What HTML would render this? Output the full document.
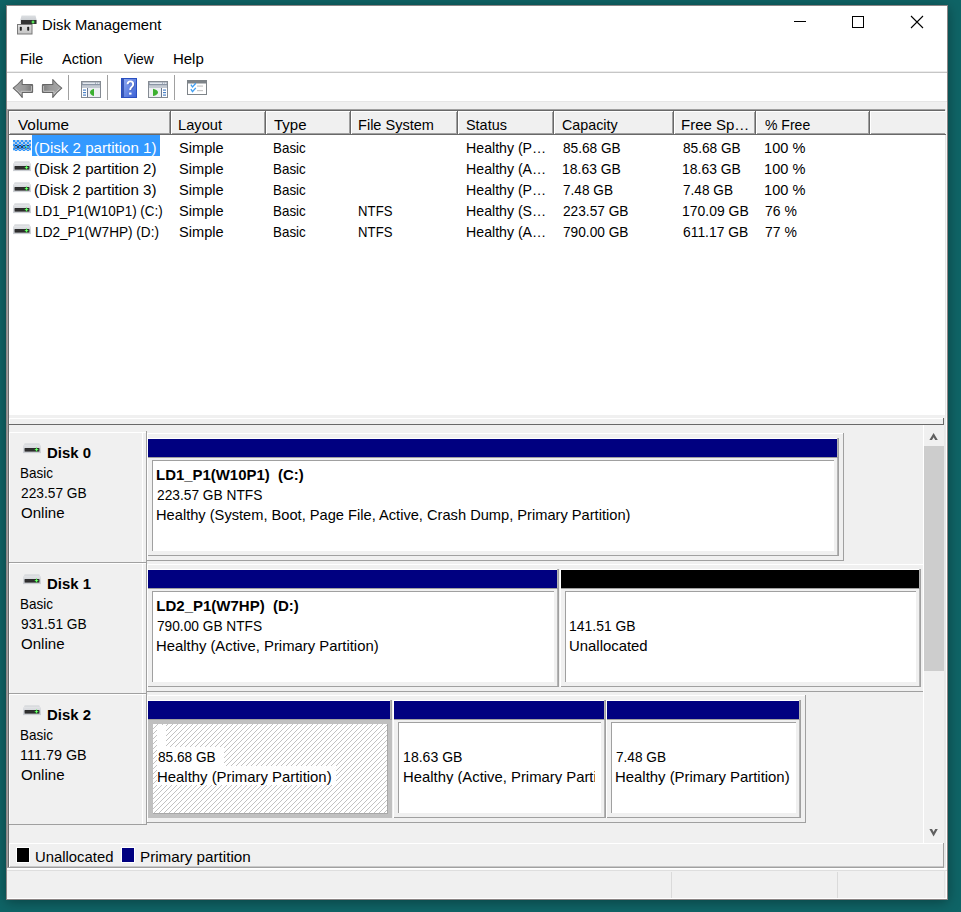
<!DOCTYPE html>
<html><head><meta charset="utf-8"><style>
html,body{margin:0;padding:0;width:961px;height:912px;overflow:hidden;}
body{background:#0f6466;position:relative;font-family:"Liberation Sans",sans-serif;}
body div, body svg{position:absolute;box-sizing:content-box;}
.t{white-space:pre;line-height:20px;height:20px;}
</style></head><body>
<div style="left:6px;top:5px;width:942px;height:895px;background:#fff;border:0;box-shadow:0 2px 12px rgba(0,0,0,0.35)"></div>
<div style="left:6px;top:5px;width:940px;height:893px;border:1px solid #8a8585;"></div>
<svg style="left:16px;top:14px" width="22" height="21" viewBox="0 0 22 21">
<defs><linearGradient id="dtop" x1="0" y1="0" x2="0" y2="1"><stop offset="0" stop-color="#dcdfe2"/><stop offset="1" stop-color="#c0c4c8"/></linearGradient>
<linearGradient id="plate" x1="0" y1="0" x2="0" y2="1"><stop offset="0" stop-color="#e4e4e4"/><stop offset="1" stop-color="#c4c4c4"/></linearGradient></defs>
<path d="M5.5 1.5 H19.5 L20.5 5.5 V9.5 H4.5 V5.5 Z" fill="url(#dtop)"/>
<rect x="5" y="6" width="15.5" height="4" fill="#333"/>
<rect x="15.4" y="7.5" width="3.2" height="1" fill="#3df03d"/><rect x="16.5" y="6.3" width="1" height="3.4" fill="#3df03d"/><circle cx="17" cy="8" r="0.8" fill="#8aff8a"/>
<rect x="1.5" y="10.5" width="14.5" height="9.5" fill="url(#plate)" stroke="#7a7a7a" stroke-width="1"/>
<rect x="3.8" y="12.8" width="2" height="4" rx="0.8" fill="#222"/>
<rect x="11.2" y="12.8" width="2" height="4" rx="0.8" fill="#222"/>
</svg>
<div class="t" style="left:41.80px;top:14.80px;font-size:15px;transform:scaleX(0.9874);transform-origin:1.00px 0;color:#000;">Disk Management</div>
<div style="left:794px;top:21px;width:12px;height:1px;background:#000;"></div>
<div style="left:852px;top:16px;width:10px;height:10px;border:1px solid #000"></div>
<svg style="left:910px;top:15px" width="14" height="14" viewBox="0 0 14 14"><path d="M1 1 L13 13 M13 1 L1 13" stroke="#000" stroke-width="1.1"/></svg>
<div class="t" style="left:19.50px;top:48.80px;font-size:15px;transform:scaleX(0.9550);transform-origin:1.00px 0;color:#000;">File</div>
<div class="t" style="left:62.40px;top:48.80px;font-size:15px;transform:scaleX(0.9674);transform-origin:0.00px 0;color:#000;">Action</div>
<div class="t" style="left:123.60px;top:48.80px;font-size:15px;transform:scaleX(0.9257);transform-origin:0.00px 0;color:#000;">View</div>
<div class="t" style="left:172.90px;top:48.80px;font-size:15px;color:#000;">Help</div>
<div style="left:7px;top:71px;width:940px;height:1px;background:#ececec;"></div>
<div style="left:7px;top:72px;width:940px;height:1px;background:#c6c6c6;"></div>
<svg style="left:12px;top:78px" width="52" height="21" viewBox="0 0 52 21">
<defs><linearGradient id="arrL" x1="0" y1="0" x2="1" y2="0"><stop offset="0" stop-color="#a9a9a9"/><stop offset="0.6" stop-color="#999"/><stop offset="1" stop-color="#747474"/></linearGradient>
<linearGradient id="arrR" x1="1" y1="0" x2="0" y2="0"><stop offset="0" stop-color="#a9a9a9"/><stop offset="0.6" stop-color="#999"/><stop offset="1" stop-color="#7a7a7a"/></linearGradient></defs>
<path d="M1.2 10.2 Q6.2 6.2 10.2 1.5 V6.5 H20 Q20.6 6.5 20.6 7.2 V13.8 Q20.6 14.5 20 14.5 H10.2 V19.5 Q6.2 14.2 1.2 10.2 Z" fill="url(#arrL)" stroke="#666" stroke-width="1.05" stroke-linejoin="round"/>
<path d="M3.4 10.6 Q6.6 13.2 9 16 V13.3 H19.4 V8" fill="none" stroke="#c6c6c6" stroke-width="0.9"/>
<path d="M49.8 10.2 Q44.8 6.2 40.8 1.5 V6.5 H31 Q30.4 6.5 30.4 7.2 V13.8 Q30.4 14.5 31 14.5 H40.8 V19.5 Q44.8 14.2 49.8 10.2 Z" fill="url(#arrR)" stroke="#666" stroke-width="1.05" stroke-linejoin="round"/>
<path d="M31.6 8 V13.3 H42 V16 Q44.4 13.2 47.6 10.6" fill="none" stroke="#c6c6c6" stroke-width="0.9"/>
</svg>
<div style="left:68px;top:75px;width:1px;height:25px;background:#a0a0a0;"></div>
<div style="left:107px;top:75px;width:1px;height:25px;background:#a0a0a0;"></div>
<div style="left:174px;top:75px;width:1px;height:25px;background:#a0a0a0;"></div>
<svg style="left:81px;top:81px" width="21" height="18" viewBox="0 0 21 18"><rect x="0.5" y="0.5" width="19" height="16" fill="#eef0f3" stroke="#858b93"/><rect x="1" y="1" width="18" height="3" fill="#a7afbb"/><rect x="2" y="1.6" width="12" height="1.4" fill="#e4e8ee"/><rect x="15" y="1.6" width="1.4" height="1.4" fill="#e4e8ee"/><rect x="17" y="1.6" width="1.4" height="1.4" fill="#e4e8ee"/><rect x="1" y="3.5" width="18" height="1" fill="#6f7c90"/><rect x="1" y="4.5" width="18" height="2.5" fill="#c3c9d2"/><rect x="1" y="7" width="5" height="9" fill="#fff"/><rect x="6" y="7" width="1" height="9" fill="#6a7890"/><rect x="2" y="8.5" width="3" height="1.2" fill="#4a82c8"/><rect x="2" y="11" width="3" height="1.2" fill="#4a82c8"/><rect x="2" y="13.5" width="3" height="1.2" fill="#4a82c8"/><path d="M13 7.8 V15 Q9 13.8 9 11.4 Q9 9 13 7.8 Z" fill="#3cb030"/></svg>
<svg style="left:148px;top:81px" width="21" height="18" viewBox="0 0 21 18"><rect x="0.5" y="0.5" width="19" height="16" fill="#eef0f3" stroke="#858b93"/><rect x="1" y="1" width="18" height="3" fill="#a7afbb"/><rect x="2" y="1.6" width="12" height="1.4" fill="#e4e8ee"/><rect x="15" y="1.6" width="1.4" height="1.4" fill="#e4e8ee"/><rect x="17" y="1.6" width="1.4" height="1.4" fill="#e4e8ee"/><rect x="1" y="3.5" width="18" height="1" fill="#6f7c90"/><rect x="1" y="4.5" width="18" height="2.5" fill="#c3c9d2"/><rect x="14" y="7" width="5" height="9" fill="#fff"/><rect x="13" y="7" width="1" height="9" fill="#6a7890"/><rect x="15" y="8.5" width="3" height="1.2" fill="#4a82c8"/><rect x="15" y="11" width="3" height="1.2" fill="#4a82c8"/><rect x="15" y="13.5" width="3" height="1.2" fill="#4a82c8"/><path d="M5 7.8 V15 Q10 13.8 10 11.4 Q10 9 5 7.8 Z" fill="#3cb030"/></svg>
<svg style="left:121px;top:78px" width="16" height="20" viewBox="0 0 16 20">
<defs><linearGradient id="hb" x1="0" y1="0" x2="1" y2="1"><stop offset="0" stop-color="#8aa6f0"/><stop offset="1" stop-color="#3d63d6"/></linearGradient></defs>
<rect x="0" y="0" width="16" height="20" fill="#2a4fc0"/>
<rect x="3" y="1" width="12" height="18" fill="url(#hb)"/>
<rect x="1" y="1" width="2" height="18" fill="#3656b8"/>
<path d="M6.6 6.2 Q6.8 3.4 9.4 3.4 Q12.2 3.4 12.2 6.2 Q12.2 8 10.4 9.2 Q9.2 10 9.2 12" stroke="#22337a" stroke-width="2" fill="none" opacity="0.35" transform="translate(0.8,0.6)"/><path d="M6.6 6.2 Q6.8 3.4 9.4 3.4 Q12.2 3.4 12.2 6.2 Q12.2 8 10.4 9.2 Q9.2 10 9.2 12" stroke="#fff" stroke-width="1.9" fill="none"/><rect x="8.1" y="14.6" width="2.4" height="2" fill="#fff"/>
</svg>
<svg style="left:187px;top:80px" width="20" height="15" viewBox="0 0 20 15">
<rect x="0.5" y="0.5" width="19" height="14" fill="#fff" stroke="#7e8489"/>
<rect x="1" y="1" width="18" height="2.5" fill="#7e8489"/>
<path d="M3.9 4.6 L5.5 7 L8.8 3.3" stroke="#3f9ef2" stroke-width="1.35" fill="none"/>
<path d="M3.9 9.2 L5.5 11.6 L8.8 7.9" stroke="#3f9ef2" stroke-width="1.35" fill="none"/>
<rect x="10" y="5.5" width="6" height="1.2" fill="#c8c8c8"/><rect x="10" y="10" width="6" height="1.2" fill="#c8c8c8"/>
</svg>
<div style="left:7px;top:101px;width:940px;height:1px;background:#e6e6e6;"></div>
<div style="left:7px;top:102px;width:940px;height:7px;background:#f0f0f0;"></div>
<div style="left:7px;top:109px;width:940px;height:1px;background:#a0a0a0;"></div>
<div style="left:8px;top:110px;width:938px;height:1px;background:#696969;"></div>
<div style="left:7px;top:109px;width:1px;height:309px;background:#a0a0a0;"></div>
<div style="left:8px;top:110px;width:1px;height:308px;background:#696969;"></div>
<div style="left:9px;top:111px;width:936px;height:304px;background:#fff;"></div>
<div style="left:9px;top:415px;width:938px;height:3px;background:#f0f0f0;"></div>
<div style="left:945px;top:109px;width:1px;height:309px;background:#e6e6e6;"></div>
<div style="left:946px;top:102px;width:1px;height:316px;background:#f7f7f7;"></div>
<div style="left:9px;top:111px;width:162px;height:24px;background:#f0f0f0;"></div>
<div style="left:9px;top:111px;width:162px;height:1px;background:#fff;"></div>
<div style="left:9px;top:111px;width:1px;height:24px;background:#fff;"></div>
<div style="left:169px;top:112px;width:1px;height:22px;background:#a0a0a0;"></div>
<div style="left:170px;top:111px;width:1px;height:24px;background:#696969;"></div>
<div style="left:10px;top:133px;width:160px;height:1px;background:#a0a0a0;"></div>
<div style="left:9px;top:134px;width:162px;height:1px;background:#696969;"></div>
<div class="t" style="left:17.50px;top:114.80px;font-size:15px;transform:scaleX(1.0203);transform-origin:0.00px 0;color:#000;">Volume</div>
<div style="left:171px;top:111px;width:95px;height:24px;background:#f0f0f0;"></div>
<div style="left:171px;top:111px;width:95px;height:1px;background:#fff;"></div>
<div style="left:171px;top:111px;width:1px;height:24px;background:#fff;"></div>
<div style="left:264px;top:112px;width:1px;height:22px;background:#a0a0a0;"></div>
<div style="left:265px;top:111px;width:1px;height:24px;background:#696969;"></div>
<div style="left:172px;top:133px;width:93px;height:1px;background:#a0a0a0;"></div>
<div style="left:171px;top:134px;width:95px;height:1px;background:#696969;"></div>
<div class="t" style="left:177.60px;top:114.80px;font-size:15px;transform:scaleX(0.9762);transform-origin:1.00px 0;color:#000;">Layout</div>
<div style="left:266px;top:111px;width:85px;height:24px;background:#f0f0f0;"></div>
<div style="left:266px;top:111px;width:85px;height:1px;background:#fff;"></div>
<div style="left:266px;top:111px;width:1px;height:24px;background:#fff;"></div>
<div style="left:349px;top:112px;width:1px;height:22px;background:#a0a0a0;"></div>
<div style="left:350px;top:111px;width:1px;height:24px;background:#696969;"></div>
<div style="left:267px;top:133px;width:83px;height:1px;background:#a0a0a0;"></div>
<div style="left:266px;top:134px;width:85px;height:1px;background:#696969;"></div>
<div class="t" style="left:274.00px;top:114.80px;font-size:15px;color:#000;">Type</div>
<div style="left:351px;top:111px;width:107px;height:24px;background:#f0f0f0;"></div>
<div style="left:351px;top:111px;width:107px;height:1px;background:#fff;"></div>
<div style="left:351px;top:111px;width:1px;height:24px;background:#fff;"></div>
<div style="left:456px;top:112px;width:1px;height:22px;background:#a0a0a0;"></div>
<div style="left:457px;top:111px;width:1px;height:24px;background:#696969;"></div>
<div style="left:352px;top:133px;width:105px;height:1px;background:#a0a0a0;"></div>
<div style="left:351px;top:134px;width:107px;height:1px;background:#696969;"></div>
<div class="t" style="left:357.70px;top:114.80px;font-size:15px;transform:scaleX(0.9694);transform-origin:1.00px 0;color:#000;">File System</div>
<div style="left:458px;top:111px;width:96px;height:24px;background:#f0f0f0;"></div>
<div style="left:458px;top:111px;width:96px;height:1px;background:#fff;"></div>
<div style="left:458px;top:111px;width:1px;height:24px;background:#fff;"></div>
<div style="left:552px;top:112px;width:1px;height:22px;background:#a0a0a0;"></div>
<div style="left:553px;top:111px;width:1px;height:24px;background:#696969;"></div>
<div style="left:459px;top:133px;width:94px;height:1px;background:#a0a0a0;"></div>
<div style="left:458px;top:134px;width:96px;height:1px;background:#696969;"></div>
<div class="t" style="left:465.60px;top:114.80px;font-size:15px;transform:scaleX(0.9613);transform-origin:0.00px 0;color:#000;">Status</div>
<div style="left:554px;top:111px;width:120px;height:24px;background:#f0f0f0;"></div>
<div style="left:554px;top:111px;width:120px;height:1px;background:#fff;"></div>
<div style="left:554px;top:111px;width:1px;height:24px;background:#fff;"></div>
<div style="left:672px;top:112px;width:1px;height:22px;background:#a0a0a0;"></div>
<div style="left:673px;top:111px;width:1px;height:24px;background:#696969;"></div>
<div style="left:555px;top:133px;width:118px;height:1px;background:#a0a0a0;"></div>
<div style="left:554px;top:134px;width:120px;height:1px;background:#696969;"></div>
<div class="t" style="left:561.90px;top:114.80px;font-size:15px;transform:scaleX(0.9531);transform-origin:0.00px 0;color:#000;">Capacity</div>
<div style="left:674px;top:111px;width:82px;height:24px;background:#f0f0f0;"></div>
<div style="left:674px;top:111px;width:82px;height:1px;background:#fff;"></div>
<div style="left:674px;top:111px;width:1px;height:24px;background:#fff;"></div>
<div style="left:754px;top:112px;width:1px;height:22px;background:#a0a0a0;"></div>
<div style="left:755px;top:111px;width:1px;height:24px;background:#696969;"></div>
<div style="left:675px;top:133px;width:80px;height:1px;background:#a0a0a0;"></div>
<div style="left:674px;top:134px;width:82px;height:1px;background:#696969;"></div>
<div class="t" style="left:681.00px;top:114.80px;font-size:15px;color:#000;">Free Sp…</div>
<div style="left:756px;top:111px;width:114px;height:24px;background:#f0f0f0;"></div>
<div style="left:756px;top:111px;width:114px;height:1px;background:#fff;"></div>
<div style="left:756px;top:111px;width:1px;height:24px;background:#fff;"></div>
<div style="left:868px;top:112px;width:1px;height:22px;background:#a0a0a0;"></div>
<div style="left:869px;top:111px;width:1px;height:24px;background:#696969;"></div>
<div style="left:757px;top:133px;width:112px;height:1px;background:#a0a0a0;"></div>
<div style="left:756px;top:134px;width:114px;height:1px;background:#696969;"></div>
<div class="t" style="left:764.50px;top:114.80px;font-size:15px;transform:scaleX(0.9353);transform-origin:0.00px 0;color:#000;">% Free</div>
<div style="left:870px;top:111px;width:76px;height:24px;background:#f0f0f0;"></div>
<div style="left:870px;top:111px;width:76px;height:1px;background:#fff;"></div>
<div style="left:870px;top:111px;width:1px;height:24px;background:#fff;"></div>
<div style="left:871px;top:133px;width:74px;height:1px;background:#a0a0a0;"></div>
<div style="left:870px;top:134px;width:76px;height:1px;background:#696969;"></div>
<div style="left:32px;top:135px;width:128px;height:21px;background:#3399ff;"></div>
<svg style="left:13px;top:140px" width="18" height="11" viewBox="0 0 18 11"><defs><linearGradient id="dvb" x1="0" y1="0" x2="0" y2="1"><stop offset="0" stop-color="#dfe1e4"/><stop offset="1" stop-color="#c9ccd1"/></linearGradient></defs><path d="M1.6 0.3 H16.3 L17.2 2.4 H0.7 Z" fill="#d9dbde"/><rect x="0" y="2.3" width="18" height="7.8" fill="url(#dvb)"/><rect x="1.6" y="5" width="14.8" height="3.6" fill="#2b2b2b"/><rect x="1.6" y="6.6" width="14.8" height="0.5" fill="#3a3a3a"/><rect x="11.8" y="6" width="3.4" height="1.1" fill="#3df03d"/><rect x="12.95" y="4.6" width="1.1" height="3.9" fill="#3df03d"/><circle cx="13.5" cy="6.55" r="0.9" fill="#7dff7d"/><defs><pattern id="chk" width="4" height="4" patternUnits="userSpaceOnUse"><rect x="0" y="0" width="2" height="2" fill="#3399ff"/><rect x="2" y="2" width="2" height="2" fill="#3399ff"/></pattern></defs><rect x="0" y="0" width="18" height="11" fill="url(#chk)"/><rect x="0" y="0" width="18" height="11" fill="#3399ff" opacity="0.25"/></svg>
<div class="t" style="left:34.20px;top:137.80px;font-size:15px;transform:scaleX(1.0065);transform-origin:0.00px 0;color:#fff;">(Disk 2 partition 1)</div>
<div class="t" style="left:178.70px;top:137.80px;font-size:15px;transform:scaleX(0.9735);transform-origin:0.00px 0;color:#000;">Simple</div>
<div class="t" style="left:273.00px;top:137.80px;font-size:15px;transform:scaleX(0.8900);transform-origin:1.00px 0;color:#000;">Basic</div>
<div class="t" style="left:465.70px;top:137.80px;font-size:15px;transform:scaleX(0.9424);transform-origin:1.00px 0;color:#000;">Healthy (P…</div>
<div class="t" style="left:562.50px;top:137.80px;font-size:15px;transform:scaleX(0.9105);transform-origin:0.00px 0;color:#000;">85.68 GB</div>
<div class="t" style="left:682.70px;top:137.80px;font-size:15px;transform:scaleX(0.9105);transform-origin:0.00px 0;color:#000;">85.68 GB</div>
<div class="t" style="left:764.40px;top:137.80px;font-size:15px;transform:scaleX(0.9710);transform-origin:1.00px 0;color:#000;">100 %</div>
<svg style="left:13px;top:161px" width="18" height="11" viewBox="0 0 18 11"><defs><linearGradient id="dvb" x1="0" y1="0" x2="0" y2="1"><stop offset="0" stop-color="#dfe1e4"/><stop offset="1" stop-color="#c9ccd1"/></linearGradient></defs><path d="M1.6 0.3 H16.3 L17.2 2.4 H0.7 Z" fill="#d9dbde"/><rect x="0" y="2.3" width="18" height="7.8" fill="url(#dvb)"/><rect x="1.6" y="5" width="14.8" height="3.6" fill="#2b2b2b"/><rect x="1.6" y="6.6" width="14.8" height="0.5" fill="#3a3a3a"/><rect x="11.8" y="6" width="3.4" height="1.1" fill="#3df03d"/><rect x="12.95" y="4.6" width="1.1" height="3.9" fill="#3df03d"/><circle cx="13.5" cy="6.55" r="0.9" fill="#7dff7d"/></svg>
<div class="t" style="left:34.20px;top:158.80px;font-size:15px;transform:scaleX(1.0065);transform-origin:0.00px 0;color:#000;">(Disk 2 partition 2)</div>
<div class="t" style="left:178.70px;top:158.80px;font-size:15px;transform:scaleX(0.9735);transform-origin:0.00px 0;color:#000;">Simple</div>
<div class="t" style="left:273.00px;top:158.80px;font-size:15px;transform:scaleX(0.8900);transform-origin:1.00px 0;color:#000;">Basic</div>
<div class="t" style="left:465.70px;top:158.80px;font-size:15px;transform:scaleX(0.9424);transform-origin:1.00px 0;color:#000;">Healthy (A…</div>
<div class="t" style="left:561.50px;top:158.80px;font-size:15px;transform:scaleX(0.9267);transform-origin:1.00px 0;color:#000;">18.63 GB</div>
<div class="t" style="left:681.70px;top:158.80px;font-size:15px;transform:scaleX(0.9267);transform-origin:1.00px 0;color:#000;">18.63 GB</div>
<div class="t" style="left:764.40px;top:158.80px;font-size:15px;transform:scaleX(0.9710);transform-origin:1.00px 0;color:#000;">100 %</div>
<svg style="left:13px;top:182px" width="18" height="11" viewBox="0 0 18 11"><defs><linearGradient id="dvb" x1="0" y1="0" x2="0" y2="1"><stop offset="0" stop-color="#dfe1e4"/><stop offset="1" stop-color="#c9ccd1"/></linearGradient></defs><path d="M1.6 0.3 H16.3 L17.2 2.4 H0.7 Z" fill="#d9dbde"/><rect x="0" y="2.3" width="18" height="7.8" fill="url(#dvb)"/><rect x="1.6" y="5" width="14.8" height="3.6" fill="#2b2b2b"/><rect x="1.6" y="6.6" width="14.8" height="0.5" fill="#3a3a3a"/><rect x="11.8" y="6" width="3.4" height="1.1" fill="#3df03d"/><rect x="12.95" y="4.6" width="1.1" height="3.9" fill="#3df03d"/><circle cx="13.5" cy="6.55" r="0.9" fill="#7dff7d"/></svg>
<div class="t" style="left:34.20px;top:179.80px;font-size:15px;transform:scaleX(1.0065);transform-origin:0.00px 0;color:#000;">(Disk 2 partition 3)</div>
<div class="t" style="left:178.70px;top:179.80px;font-size:15px;transform:scaleX(0.9735);transform-origin:0.00px 0;color:#000;">Simple</div>
<div class="t" style="left:273.00px;top:179.80px;font-size:15px;transform:scaleX(0.8900);transform-origin:1.00px 0;color:#000;">Basic</div>
<div class="t" style="left:465.70px;top:179.80px;font-size:15px;transform:scaleX(0.9424);transform-origin:1.00px 0;color:#000;">Healthy (P…</div>
<div class="t" style="left:562.50px;top:179.80px;font-size:15px;transform:scaleX(0.9086);transform-origin:0.00px 0;color:#000;">7.48 GB</div>
<div class="t" style="left:682.70px;top:179.80px;font-size:15px;transform:scaleX(0.9086);transform-origin:0.00px 0;color:#000;">7.48 GB</div>
<div class="t" style="left:764.40px;top:179.80px;font-size:15px;transform:scaleX(0.9710);transform-origin:1.00px 0;color:#000;">100 %</div>
<svg style="left:13px;top:203px" width="18" height="11" viewBox="0 0 18 11"><defs><linearGradient id="dvb" x1="0" y1="0" x2="0" y2="1"><stop offset="0" stop-color="#dfe1e4"/><stop offset="1" stop-color="#c9ccd1"/></linearGradient></defs><path d="M1.6 0.3 H16.3 L17.2 2.4 H0.7 Z" fill="#d9dbde"/><rect x="0" y="2.3" width="18" height="7.8" fill="url(#dvb)"/><rect x="1.6" y="5" width="14.8" height="3.6" fill="#2b2b2b"/><rect x="1.6" y="6.6" width="14.8" height="0.5" fill="#3a3a3a"/><rect x="11.8" y="6" width="3.4" height="1.1" fill="#3df03d"/><rect x="12.95" y="4.6" width="1.1" height="3.9" fill="#3df03d"/><circle cx="13.5" cy="6.55" r="0.9" fill="#7dff7d"/></svg>
<div class="t" style="left:34.70px;top:200.80px;font-size:15px;transform:scaleX(0.8951);transform-origin:1.00px 0;color:#000;">LD1_P1(W10P1) (C:)</div>
<div class="t" style="left:178.70px;top:200.80px;font-size:15px;transform:scaleX(0.9735);transform-origin:0.00px 0;color:#000;">Simple</div>
<div class="t" style="left:273.00px;top:200.80px;font-size:15px;transform:scaleX(0.8900);transform-origin:1.00px 0;color:#000;">Basic</div>
<div class="t" style="left:358.30px;top:200.80px;font-size:15px;transform:scaleX(0.8753);transform-origin:1.00px 0;color:#000;">NTFS</div>
<div class="t" style="left:465.70px;top:200.80px;font-size:15px;transform:scaleX(0.9424);transform-origin:1.00px 0;color:#000;">Healthy (S…</div>
<div class="t" style="left:562.50px;top:200.80px;font-size:15px;transform:scaleX(0.9134);transform-origin:0.00px 0;color:#000;">223.57 GB</div>
<div class="t" style="left:681.70px;top:200.80px;font-size:15px;transform:scaleX(0.9291);transform-origin:1.00px 0;color:#000;">170.09 GB</div>
<div class="t" style="left:765.40px;top:200.80px;font-size:15px;transform:scaleX(0.9305);transform-origin:0.00px 0;color:#000;">76 %</div>
<svg style="left:13px;top:224px" width="18" height="11" viewBox="0 0 18 11"><defs><linearGradient id="dvb" x1="0" y1="0" x2="0" y2="1"><stop offset="0" stop-color="#dfe1e4"/><stop offset="1" stop-color="#c9ccd1"/></linearGradient></defs><path d="M1.6 0.3 H16.3 L17.2 2.4 H0.7 Z" fill="#d9dbde"/><rect x="0" y="2.3" width="18" height="7.8" fill="url(#dvb)"/><rect x="1.6" y="5" width="14.8" height="3.6" fill="#2b2b2b"/><rect x="1.6" y="6.6" width="14.8" height="0.5" fill="#3a3a3a"/><rect x="11.8" y="6" width="3.4" height="1.1" fill="#3df03d"/><rect x="12.95" y="4.6" width="1.1" height="3.9" fill="#3df03d"/><circle cx="13.5" cy="6.55" r="0.9" fill="#7dff7d"/></svg>
<div class="t" style="left:34.70px;top:221.80px;font-size:15px;transform:scaleX(0.9064);transform-origin:1.00px 0;color:#000;">LD2_P1(W7HP) (D:)</div>
<div class="t" style="left:178.70px;top:221.80px;font-size:15px;transform:scaleX(0.9735);transform-origin:0.00px 0;color:#000;">Simple</div>
<div class="t" style="left:273.00px;top:221.80px;font-size:15px;transform:scaleX(0.8900);transform-origin:1.00px 0;color:#000;">Basic</div>
<div class="t" style="left:358.30px;top:221.80px;font-size:15px;transform:scaleX(0.8753);transform-origin:1.00px 0;color:#000;">NTFS</div>
<div class="t" style="left:465.70px;top:221.80px;font-size:15px;transform:scaleX(0.9424);transform-origin:1.00px 0;color:#000;">Healthy (A…</div>
<div class="t" style="left:562.50px;top:221.80px;font-size:15px;transform:scaleX(0.9134);transform-origin:0.00px 0;color:#000;">790.00 GB</div>
<div class="t" style="left:682.70px;top:221.80px;font-size:15px;transform:scaleX(0.9249);transform-origin:0.00px 0;color:#000;">611.17 GB</div>
<div class="t" style="left:765.40px;top:221.80px;font-size:15px;transform:scaleX(0.9305);transform-origin:0.00px 0;color:#000;">77 %</div>
<div style="left:9px;top:418px;width:935px;height:1px;background:#fff;"></div>
<div style="left:9px;top:419px;width:935px;height:5px;background:#f0f0f0;"></div>
<div style="left:9px;top:418px;width:1px;height:6px;background:#fff;"></div>
<div style="left:943px;top:418px;width:1px;height:7px;background:#696969;"></div>
<div style="left:8px;top:424px;width:936px;height:1px;background:#696969;"></div>
<div style="left:9px;top:425px;width:915px;height:418px;background:#f0f0f0;"></div>
<div style="left:7px;top:418px;width:1px;height:451px;background:#a0a0a0;"></div>
<div style="left:8px;top:418px;width:1px;height:451px;background:#696969;"></div>
<div style="left:923px;top:425px;width:1px;height:418px;background:#fff;"></div>
<div style="left:924px;top:425px;width:20px;height:418px;background:#f0f0f0;"></div>
<div style="left:924px;top:446px;width:20px;height:225px;background:#cdcdcd;"></div>
<svg style="left:928px;top:431px" width="12" height="10" viewBox="0 0 12 10"><path d="M1.4 9 L5.6 2 L9.8 9 L7.2 9 L5.6 6.3 L4 9 Z" fill="#606060"/></svg>
<svg style="left:928px;top:827px" width="12" height="10" viewBox="0 0 12 10"><path d="M1.4 2 L5.6 9.5 L9.8 2 L7.2 2 L5.6 4.9 L4 2 Z" fill="#606060"/></svg>
<div style="left:944px;top:418px;width:2px;height:450px;background:#e8e8e8;"></div>
<div style="left:946px;top:418px;width:1px;height:481px;background:#fff;"></div>
<div style="left:9px;top:432px;width:138px;height:1px;background:#fff;"></div>
<div style="left:9px;top:432px;width:1px;height:130px;background:#fff;"></div>
<div style="left:142px;top:432px;width:1px;height:130px;background:#fff;"></div>
<div style="left:146px;top:431px;width:1px;height:132px;background:#a0a0a0;"></div>
<div style="left:9px;top:562px;width:138px;height:1px;background:#a0a0a0;"></div>
<svg style="left:23px;top:443px" width="18" height="11" viewBox="0 0 18 11"><defs><linearGradient id="dvb" x1="0" y1="0" x2="0" y2="1"><stop offset="0" stop-color="#dfe1e4"/><stop offset="1" stop-color="#c9ccd1"/></linearGradient></defs><path d="M1.6 0.3 H16.3 L17.2 2.4 H0.7 Z" fill="#d9dbde"/><rect x="0" y="2.3" width="18" height="7.8" fill="url(#dvb)"/><rect x="1.6" y="5" width="14.8" height="3.6" fill="#2b2b2b"/><rect x="1.6" y="6.6" width="14.8" height="0.5" fill="#3a3a3a"/><rect x="11.8" y="6" width="3.4" height="1.1" fill="#3df03d"/><rect x="12.95" y="4.6" width="1.1" height="3.9" fill="#3df03d"/><circle cx="13.5" cy="6.55" r="0.9" fill="#7dff7d"/></svg>
<div class="t" style="left:46.80px;top:442.80px;font-size:15px;font-weight:bold;transform:scaleX(0.9941);transform-origin:1.00px 0;color:#000;">Disk 0</div>
<div class="t" style="left:20.40px;top:462.80px;font-size:15px;transform:scaleX(0.8983);transform-origin:1.00px 0;color:#000;">Basic</div>
<div class="t" style="left:21.40px;top:482.80px;font-size:15px;transform:scaleX(0.9161);transform-origin:0.00px 0;color:#000;">223.57 GB</div>
<div class="t" style="left:21.40px;top:502.80px;font-size:15px;transform:scaleX(1.0043);transform-origin:0.00px 0;color:#000;">Online</div>
<div style="left:9px;top:563px;width:138px;height:1px;background:#fff;"></div>
<div style="left:9px;top:563px;width:1px;height:130px;background:#fff;"></div>
<div style="left:142px;top:563px;width:1px;height:130px;background:#fff;"></div>
<div style="left:146px;top:562px;width:1px;height:132px;background:#a0a0a0;"></div>
<div style="left:9px;top:693px;width:138px;height:1px;background:#a0a0a0;"></div>
<svg style="left:23px;top:574px" width="18" height="11" viewBox="0 0 18 11"><defs><linearGradient id="dvb" x1="0" y1="0" x2="0" y2="1"><stop offset="0" stop-color="#dfe1e4"/><stop offset="1" stop-color="#c9ccd1"/></linearGradient></defs><path d="M1.6 0.3 H16.3 L17.2 2.4 H0.7 Z" fill="#d9dbde"/><rect x="0" y="2.3" width="18" height="7.8" fill="url(#dvb)"/><rect x="1.6" y="5" width="14.8" height="3.6" fill="#2b2b2b"/><rect x="1.6" y="6.6" width="14.8" height="0.5" fill="#3a3a3a"/><rect x="11.8" y="6" width="3.4" height="1.1" fill="#3df03d"/><rect x="12.95" y="4.6" width="1.1" height="3.9" fill="#3df03d"/><circle cx="13.5" cy="6.55" r="0.9" fill="#7dff7d"/></svg>
<div class="t" style="left:46.80px;top:573.80px;font-size:15px;font-weight:bold;transform:scaleX(0.9941);transform-origin:1.00px 0;color:#000;">Disk 1</div>
<div class="t" style="left:20.40px;top:593.80px;font-size:15px;transform:scaleX(0.8983);transform-origin:1.00px 0;color:#000;">Basic</div>
<div class="t" style="left:21.40px;top:613.80px;font-size:15px;transform:scaleX(0.9161);transform-origin:0.00px 0;color:#000;">931.51 GB</div>
<div class="t" style="left:21.40px;top:633.80px;font-size:15px;transform:scaleX(1.0043);transform-origin:0.00px 0;color:#000;">Online</div>
<div style="left:9px;top:694px;width:138px;height:1px;background:#fff;"></div>
<div style="left:9px;top:694px;width:1px;height:130px;background:#fff;"></div>
<div style="left:142px;top:694px;width:1px;height:130px;background:#fff;"></div>
<div style="left:146px;top:693px;width:1px;height:132px;background:#a0a0a0;"></div>
<div style="left:9px;top:824px;width:138px;height:1px;background:#a0a0a0;"></div>
<svg style="left:23px;top:705px" width="18" height="11" viewBox="0 0 18 11"><defs><linearGradient id="dvb" x1="0" y1="0" x2="0" y2="1"><stop offset="0" stop-color="#dfe1e4"/><stop offset="1" stop-color="#c9ccd1"/></linearGradient></defs><path d="M1.6 0.3 H16.3 L17.2 2.4 H0.7 Z" fill="#d9dbde"/><rect x="0" y="2.3" width="18" height="7.8" fill="url(#dvb)"/><rect x="1.6" y="5" width="14.8" height="3.6" fill="#2b2b2b"/><rect x="1.6" y="6.6" width="14.8" height="0.5" fill="#3a3a3a"/><rect x="11.8" y="6" width="3.4" height="1.1" fill="#3df03d"/><rect x="12.95" y="4.6" width="1.1" height="3.9" fill="#3df03d"/><circle cx="13.5" cy="6.55" r="0.9" fill="#7dff7d"/></svg>
<div class="t" style="left:46.80px;top:704.80px;font-size:15px;font-weight:bold;transform:scaleX(0.9941);transform-origin:1.00px 0;color:#000;">Disk 2</div>
<div class="t" style="left:20.40px;top:724.80px;font-size:15px;transform:scaleX(0.8983);transform-origin:1.00px 0;color:#000;">Basic</div>
<div class="t" style="left:20.40px;top:744.80px;font-size:15px;transform:scaleX(0.9593);transform-origin:1.00px 0;color:#000;">111.79 GB</div>
<div class="t" style="left:21.40px;top:764.80px;font-size:15px;transform:scaleX(1.0043);transform-origin:0.00px 0;color:#000;">Online</div>
<div style="left:147px;top:433px;width:696px;height:1px;background:#fff;"></div>
<div style="left:147px;top:433px;width:1px;height:128px;background:#fff;"></div>
<div style="left:843px;top:433px;width:1px;height:128px;background:#a0a0a0;"></div>
<div style="left:147px;top:560px;width:697px;height:1px;background:#a0a0a0;"></div>
<div style="left:147px;top:438px;width:1px;height:118px;background:#fff;"></div>
<div style="left:147px;top:438px;width:692px;height:1px;background:#fff;"></div>
<div style="left:148px;top:439px;width:689px;height:18px;background:#000080;"></div>
<div style="left:837px;top:438px;width:1px;height:118px;background:#b4b4b4;"></div>
<div style="left:838px;top:438px;width:1px;height:118px;background:#a0a0a0;"></div>
<div style="left:148px;top:457px;width:690px;height:1px;background:#a0a0a0;"></div>
<div style="left:148px;top:555px;width:691px;height:1px;background:#a0a0a0;"></div>
<div style="left:152px;top:460px;width:682px;height:91px;background:#fff;"></div>
<div style="left:152px;top:460px;width:682px;height:1px;background:#a0a0a0;"></div>
<div style="left:152px;top:460px;width:1px;height:91px;background:#a0a0a0;"></div>
<div class="t" style="left:155.90px;top:464.80px;font-size:15px;font-weight:bold;transform:scaleX(0.9955);transform-origin:1.00px 0;color:#000;">LD1_P1(W10P1)&nbsp; (C:)</div>
<div class="t" style="left:157.00px;top:484.80px;font-size:15px;transform:scaleX(0.9162);transform-origin:0.00px 0;color:#000;">223.57 GB NTFS</div>
<div class="t" style="left:156.00px;top:504.80px;font-size:15px;transform:scaleX(0.9761);transform-origin:1.00px 0;color:#000;">Healthy (System, Boot, Page File, Active, Crash Dump, Primary Partition)</div>
<div style="left:147px;top:564px;width:776px;height:1px;background:#fff;"></div>
<div style="left:147px;top:564px;width:1px;height:128px;background:#fff;"></div>
<div style="left:147px;top:691px;width:776px;height:1px;background:#a0a0a0;"></div>
<div style="left:147px;top:569px;width:1px;height:118px;background:#fff;"></div>
<div style="left:147px;top:569px;width:412px;height:1px;background:#fff;"></div>
<div style="left:148px;top:570px;width:409px;height:18px;background:#000080;"></div>
<div style="left:557px;top:569px;width:1px;height:118px;background:#b4b4b4;"></div>
<div style="left:558px;top:569px;width:1px;height:118px;background:#a0a0a0;"></div>
<div style="left:148px;top:588px;width:410px;height:1px;background:#a0a0a0;"></div>
<div style="left:148px;top:686px;width:411px;height:1px;background:#a0a0a0;"></div>
<div style="left:152px;top:591px;width:402px;height:91px;background:#fff;"></div>
<div style="left:152px;top:591px;width:402px;height:1px;background:#a0a0a0;"></div>
<div style="left:152px;top:591px;width:1px;height:91px;background:#a0a0a0;"></div>
<div class="t" style="left:156.30px;top:595.80px;font-size:15px;font-weight:bold;color:#000;">LD2_P1(W7HP)&nbsp; (D:)</div>
<div class="t" style="left:157.30px;top:615.80px;font-size:15px;transform:scaleX(0.9136);transform-origin:0.00px 0;color:#000;">790.00 GB NTFS</div>
<div class="t" style="left:156.30px;top:635.80px;font-size:15px;transform:scaleX(0.9890);transform-origin:1.00px 0;color:#000;">Healthy (Active, Primary Partition)</div>
<div style="left:560px;top:569px;width:1px;height:118px;background:#fff;"></div>
<div style="left:560px;top:569px;width:361px;height:1px;background:#fff;"></div>
<div style="left:561px;top:570px;width:358px;height:18px;background:#000000;"></div>
<div style="left:919px;top:569px;width:1px;height:118px;background:#b4b4b4;"></div>
<div style="left:920px;top:569px;width:1px;height:118px;background:#a0a0a0;"></div>
<div style="left:561px;top:588px;width:359px;height:1px;background:#a0a0a0;"></div>
<div style="left:561px;top:686px;width:360px;height:1px;background:#a0a0a0;"></div>
<div style="left:565px;top:591px;width:351px;height:91px;background:#fff;"></div>
<div style="left:565px;top:591px;width:351px;height:1px;background:#a0a0a0;"></div>
<div style="left:565px;top:591px;width:1px;height:91px;background:#a0a0a0;"></div>
<div class="t" style="left:569.20px;top:615.80px;font-size:15px;transform:scaleX(0.9277);transform-origin:1.00px 0;color:#000;">141.51 GB</div>
<div class="t" style="left:569.20px;top:635.80px;font-size:15px;transform:scaleX(0.9926);transform-origin:1.00px 0;color:#000;">Unallocated</div>
<div style="left:147px;top:695px;width:658px;height:1px;background:#fff;"></div>
<div style="left:147px;top:695px;width:1px;height:128px;background:#fff;"></div>
<div style="left:805px;top:695px;width:1px;height:128px;background:#a0a0a0;"></div>
<div style="left:147px;top:822px;width:659px;height:1px;background:#a0a0a0;"></div>
<div style="left:147px;top:700px;width:1px;height:118px;background:#fff;"></div>
<div style="left:147px;top:700px;width:245px;height:1px;background:#fff;"></div>
<div style="left:148px;top:701px;width:242px;height:18px;background:#000080;"></div>
<div style="left:390px;top:700px;width:1px;height:118px;background:#b4b4b4;"></div>
<div style="left:391px;top:700px;width:1px;height:118px;background:#a0a0a0;"></div>
<div style="left:148px;top:719px;width:243px;height:1px;background:#a0a0a0;"></div>
<div style="left:148px;top:817px;width:244px;height:1px;background:#a0a0a0;"></div>
<div style="left:148px;top:720px;width:244px;height:98px;background:#c0c0c0;"></div>
<svg style="left:153px;top:724px" width="234" height="89"><defs><pattern id="hp" width="5" height="5" patternUnits="userSpaceOnUse"><rect x="4" y="0" width="1" height="1" fill="#c2c2c2"/><rect x="3" y="1" width="1" height="1" fill="#c2c2c2"/><rect x="2" y="2" width="1" height="1" fill="#c2c2c2"/><rect x="1" y="3" width="1" height="1" fill="#c2c2c2"/><rect x="0" y="4" width="1" height="1" fill="#c2c2c2"/></pattern></defs><rect width="100%" height="100%" fill="#fff"/><rect width="100%" height="100%" fill="url(#hp)"/></svg>
<div style="left:387px;top:724px;width:1px;height:90px;background:#a8a8a8;"></div>
<div style="left:153px;top:813px;width:235px;height:1px;background:#a8a8a8;"></div>
<div style="left:157px;top:725px;width:9px;height:22px;background:#fff;"></div>
<div style="left:157px;top:747px;width:67px;height:19px;background:#fff;"></div>
<div style="left:157px;top:766px;width:179px;height:19px;background:#fff;"></div>
<div class="t" style="left:157.60px;top:746.80px;font-size:15px;transform:scaleX(0.9105);transform-origin:0.00px 0;color:#000;">85.68 GB</div>
<div class="t" style="left:156.60px;top:766.80px;font-size:15px;transform:scaleX(0.9927);transform-origin:1.00px 0;color:#000;">Healthy (Primary Partition)</div>
<div style="left:393px;top:700px;width:1px;height:118px;background:#fff;"></div>
<div style="left:393px;top:700px;width:213px;height:1px;background:#fff;"></div>
<div style="left:394px;top:701px;width:210px;height:18px;background:#000080;"></div>
<div style="left:604px;top:700px;width:1px;height:118px;background:#b4b4b4;"></div>
<div style="left:605px;top:700px;width:1px;height:118px;background:#a0a0a0;"></div>
<div style="left:394px;top:719px;width:211px;height:1px;background:#a0a0a0;"></div>
<div style="left:394px;top:817px;width:212px;height:1px;background:#a0a0a0;"></div>
<div style="left:398px;top:722px;width:203px;height:91px;background:#fff;"></div>
<div style="left:398px;top:722px;width:203px;height:1px;background:#a0a0a0;"></div>
<div style="left:398px;top:722px;width:1px;height:91px;background:#a0a0a0;"></div>
<div style="left:403px;top:744px;width:192px;height:40px;overflow:hidden">
<div class="t" style="left:-0.50px;top:2.80px;font-size:15px;transform:scaleX(0.9379);transform-origin:1.00px 0;color:#000;">18.63 GB</div>
<div class="t" style="left:-0.50px;top:22.80px;font-size:15px;transform:scaleX(0.9890);transform-origin:1.00px 0;color:#000;">Healthy (Active, Primary Partition)</div>
</div>
<div style="left:606px;top:700px;width:1px;height:118px;background:#fff;"></div>
<div style="left:606px;top:700px;width:195px;height:1px;background:#fff;"></div>
<div style="left:607px;top:701px;width:192px;height:18px;background:#000080;"></div>
<div style="left:799px;top:700px;width:1px;height:118px;background:#b4b4b4;"></div>
<div style="left:800px;top:700px;width:1px;height:118px;background:#a0a0a0;"></div>
<div style="left:607px;top:719px;width:193px;height:1px;background:#a0a0a0;"></div>
<div style="left:607px;top:817px;width:194px;height:1px;background:#a0a0a0;"></div>
<div style="left:611px;top:722px;width:185px;height:91px;background:#fff;"></div>
<div style="left:611px;top:722px;width:185px;height:1px;background:#a0a0a0;"></div>
<div style="left:611px;top:722px;width:1px;height:91px;background:#a0a0a0;"></div>
<div class="t" style="left:616.00px;top:746.80px;font-size:15px;transform:scaleX(0.9086);transform-origin:0.00px 0;color:#000;">7.48 GB</div>
<div class="t" style="left:615.00px;top:766.80px;font-size:15px;transform:scaleX(0.9927);transform-origin:1.00px 0;color:#000;">Healthy (Primary Partition)</div>
<div style="left:9px;top:843px;width:935px;height:1px;background:#fff;"></div>
<div style="left:9px;top:843px;width:1px;height:25px;background:#fff;"></div>
<div style="left:10px;top:844px;width:933px;height:23px;background:#f0f0f0;"></div>
<div style="left:8px;top:867px;width:936px;height:1px;background:#a0a0a0;"></div>
<div style="left:943px;top:843px;width:1px;height:25px;background:#a0a0a0;"></div>
<div style="left:17px;top:848px;width:12px;height:14px;background:#000;outline:1px solid #fff"></div>
<div class="t" style="left:35.20px;top:846.80px;font-size:15px;transform:scaleX(0.9900);transform-origin:1.00px 0;color:#000;">Unallocated</div>
<div style="left:122px;top:848px;width:12px;height:14px;background:#000080;outline:1px solid #fff"></div>
<div class="t" style="left:140.30px;top:846.80px;font-size:15px;transform:scaleX(1.0143);transform-origin:1.00px 0;color:#000;">Primary partition</div>
<div style="left:10px;top:866px;width:933px;height:1px;background:#c8c8c8;"></div>
<div style="left:7px;top:868px;width:940px;height:1px;background:#fff;"></div>
<div style="left:7px;top:869px;width:940px;height:1px;background:#fbfbfb;"></div>
<div style="left:7px;top:870px;width:939px;height:29px;background:#f0f0f0;"></div>
<div style="left:7px;top:870px;width:940px;height:1px;background:#dedede;"></div>
<div style="left:671px;top:872px;width:1px;height:26px;background:#dadada;"></div>
<div style="left:837px;top:872px;width:1px;height:26px;background:#dadada;"></div>
<div style="left:944px;top:870px;width:1px;height:28px;background:#e3e3e3;"></div>
<div style="left:7px;top:898px;width:940px;height:1px;background:#fff;"></div>
</body></html>
